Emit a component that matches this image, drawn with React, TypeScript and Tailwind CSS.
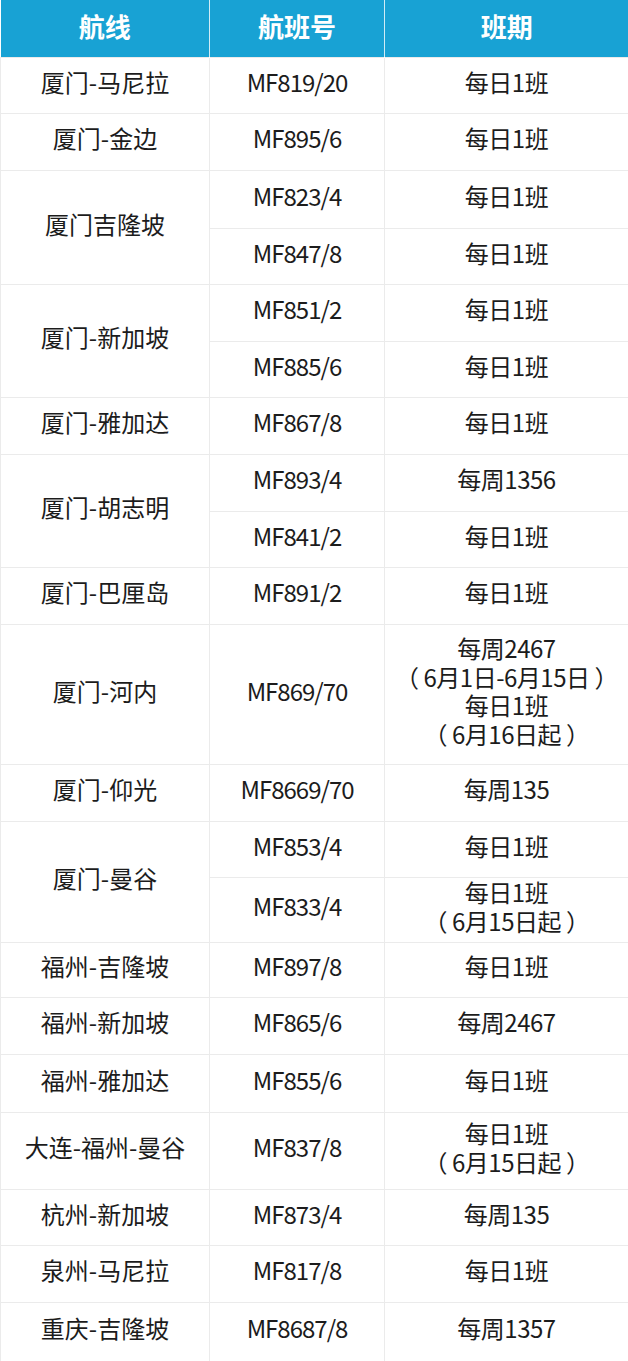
const font = { fontFamily: '"Noto Sans CJK SC", "Microsoft YaHei", sans-serif' };

type Row = {
  h: string;
  route?: string;
  span?: number;
  flight: string;
  sched: string[];
};

const rows: Row[] = [
  { h: "h-[56px]", route: "厦门-马尼拉", flight: "MF819/20", sched: ["每日1班"] },
  { h: "h-[57px]", route: "厦门-金边", flight: "MF895/6", sched: ["每日1班"] },
  { h: "h-[58px]", route: "厦门吉隆坡", span: 2, flight: "MF823/4", sched: ["每日1班"] },
  { h: "h-[56px]", flight: "MF847/8", sched: ["每日1班"] },
  { h: "h-[57px]", route: "厦门-新加坡", span: 2, flight: "MF851/2", sched: ["每日1班"] },
  { h: "h-[56px]", flight: "MF885/6", sched: ["每日1班"] },
  { h: "h-[57px]", route: "厦门-雅加达", flight: "MF867/8", sched: ["每日1班"] },
  { h: "h-[57px]", route: "厦门-胡志明", span: 2, flight: "MF893/4", sched: ["每周1356"] },
  { h: "h-[56px]", flight: "MF841/2", sched: ["每日1班"] },
  { h: "h-[57px]", route: "厦门-巴厘岛", flight: "MF891/2", sched: ["每日1班"] },
  {
    h: "h-[140px]",
    route: "厦门-河内",
    flight: "MF869/70",
    sched: ["每周2467", "（6月1日-6月15日）", "每日1班", "（6月16日起）"],
  },
  { h: "h-[57px]", route: "厦门-仰光", flight: "MF8669/70", sched: ["每周135"] },
  { h: "h-[56px]", route: "厦门-曼谷", span: 2, flight: "MF853/4", sched: ["每日1班"] },
  { h: "h-[65px]", flight: "MF833/4", sched: ["每日1班", "（6月15日起）"] },
  { h: "h-[55px]", route: "福州-吉隆坡", flight: "MF897/8", sched: ["每日1班"] },
  { h: "h-[57px]", route: "福州-新加坡", flight: "MF865/6", sched: ["每周2467"] },
  { h: "h-[58px]", route: "福州-雅加达", flight: "MF855/6", sched: ["每日1班"] },
  { h: "h-[77px]", route: "大连-福州-曼谷", flight: "MF837/8", sched: ["每日1班", "（6月15日起）"] },
  { h: "h-[56px]", route: "杭州-新加坡", flight: "MF873/4", sched: ["每周135"] },
  { h: "h-[57px]", route: "泉州-马尼拉", flight: "MF817/8", sched: ["每日1班"] },
  { h: "h-[59px]", route: "重庆-吉隆坡", flight: "MF8687/8", sched: ["每周1357"] },
];

const cell = "border border-[#ebebeb] text-center align-middle p-0 pb-[6px]";

// brackets have a gap before/after the text in the reference
function Line({ text }: { text: string }) {
  if (!text.startsWith("（")) return <div>{text}</div>;
  const inner = text.slice(1, -1);
  return (
    <div>
      <span className="pr-[5px]">（</span>
      {inner}
      <span className="pl-[5px]">）</span>
    </div>
  );
}

export default function App() {
  return (
    <div className="w-[628px] bg-white text-[#1c1c1c] text-[24px] leading-[28.5px]" style={font}>
      <table className="w-[628px] table-fixed border-collapse">
        <colgroup>
          <col className="w-[209px]" />
          <col className="w-[175px]" />
          <col className="w-[244px]" />
        </colgroup>
        <thead>
          <tr className="h-[57px] bg-[#18a2d4] text-white text-[26px] font-bold">
            <th className="border-r border-white/80 text-center pb-[4px]">航线</th>
            <th className="border-r border-white/80 text-center pb-[4px]">航班号</th>
            <th className="text-center pb-[4px]">班期</th>
          </tr>
        </thead>
        <tbody>
          {rows.map((r, i) => (
            <tr key={i} className={r.h}>
              {r.route && (
                <td className={cell} rowSpan={r.span ?? 1}>
                  {r.route}
                </td>
              )}
              <td className={`${cell} tracking-[-1px]`}>{r.flight}</td>
              <td className={`${cell} tracking-[-0.5px]`}>
                {r.sched.map((s, j) => (
                  <Line key={j} text={s} />
                ))}
              </td>
            </tr>
          ))}
        </tbody>
      </table>
    </div>
  );
}
